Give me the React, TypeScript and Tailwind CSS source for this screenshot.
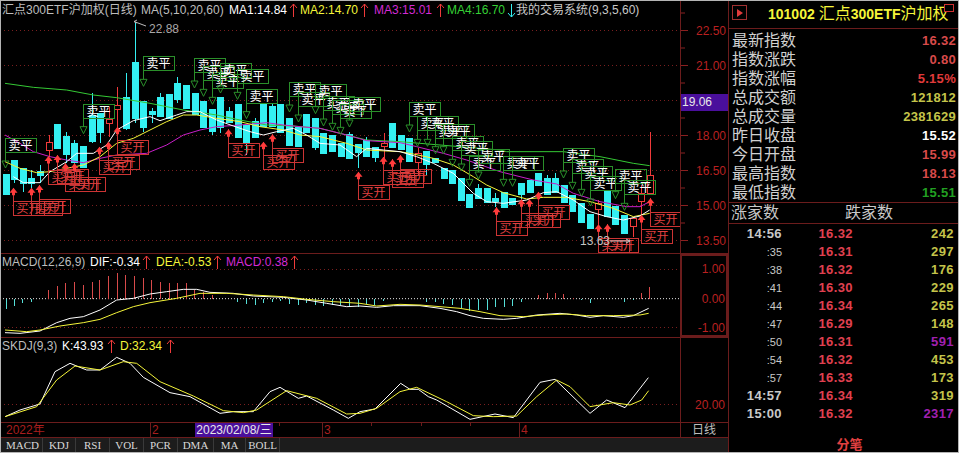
const font = "[font-family:'Liberation_Sans','Noto_Sans_CJK_SC',sans-serif]";

const RED = "#f03a3a";
const CYAN = "#34f0f2";

// 坐标都是放大 3 倍量出来的, 这里换回实际像素
const toPts = (arr: number[][]) => arr.map(([x, y]) => `${x / 3},${y / 3}`).join(" ");
const second = 1200;

// top, bottom, wickTop, wickBottom, hollow
const candles: number[][] = [
  [522, 585, 522, 585], [480, 540, 480, 550], [505, 553, 505, 575], [533, 553, 510, 565], [514, 527, 495, 550],
  [425, 450, 405, 470, 1], [372, 448, 372, 448], [408, 465, 395, 490], [430, 490, 420, 495], [438, 505, 438, 505],
  [345, 425, 280, 430], [340, 400, 340, 430], [358, 370, 320, 410, 1], [315, 327, 262, 380, 1], [292, 388, 220, 390],
  [186, 357, 65, 370], [303, 385, 303, 395], [333, 345, 325, 370], [292, 352, 280, 352], [282, 358, 282, 358],
  [250, 300, 232, 310], [255, 328, 255, 328], [280, 345, 280, 345], [303, 385, 303, 385], [327, 395, 327, 405],
  [292, 385, 292, 400], [333, 370, 320, 370], [312, 415, 312, 415], [375, 430, 375, 465], [362, 413, 355, 413],
  [312, 380, 312, 380], [318, 380, 310, 380], [312, 400, 312, 400], [353, 438, 353, 438], [380, 440, 380, 440],
  [342, 400, 342, 400], [355, 445, 355, 450], [400, 462, 400, 462], [405, 455, 405, 455], [428, 470, 428, 470],
  [403, 478, 395, 478], [432, 458, 432, 503], [420, 472, 410, 472], [440, 475, 440, 485], [428, 437, 400, 480, 1],
  [370, 443, 370, 443], [405, 450, 405, 450], [413, 485, 413, 485], [460, 485, 445, 525, 1], [452, 495, 452, 525],
  [475, 490, 475, 490], [505, 537, 505, 537], [510, 552, 510, 552], [535, 603, 535, 603], [582, 624, 582, 624],
  [565, 597, 552, 597], [565, 610, 565, 610], [595, 605, 580, 620], [575, 623, 575, 623], [595, 615, 595, 615],
  [550, 585, 550, 600], [540, 580, 540, 580], [520, 558, 520, 558], [535, 585, 525, 585], [533, 580, 520, 580],
  [555, 610, 555, 610], [585, 637, 585, 637], [610, 668, 610, 668], [643, 688, 643, 688], [610, 628, 600, 680, 1],
  [570, 650, 570, 650], [618, 675, 618, 675], [645, 703, 645, 703], [655, 678, 655, 710, 1], [580, 603, 555, 650, 1],
  [525, 580, 397, 580, 1],
];

const sells = [
  [15, 483], [248, 380], [428, 238], [583, 243], [608, 268], [635, 292], [661, 258], [712, 277], [737, 335],
  [866, 315], [893, 345], [944, 320], [970, 357], [995, 370], [1021, 382], [1048, 360],
  ...[
    [28, 375], [52, 418], [80, 418], [104, 440], [130, 440], [157, 478], [182, 492], [207, 538], [233, 516],
    [310, 538], [337, 538], [490, 513], [517, 547], [543, 568], [570, 597], [646, 575], [673, 610],
  ].map(([x, y]) => [x + second, y]),
];

const buys = [
  [40, 563], [94, 563], [118, 555], [145, 468], [170, 465], [196, 490], [221, 490], [298, 440], [325, 425],
  [350, 380], [685, 388], [790, 425], [815, 403], [1073, 515], [1150, 470], [1175, 478],
  ...[
    [0, 465], [287, 622], [362, 598], [388, 598], [415, 575], [595, 673], [620, 673], [724, 645], [749, 595],
  ].map(([x, y]) => [x + second, y]),
];

const ma60 = [[15, 250], [100, 262], [200, 270], [280, 285], [350, 293], [450, 310], [550, 330], [650, 345], [720, 360], [800, 375], [880, 378], [960, 385], [1040, 405], [1100, 420], [1200, 425], [1500, 450], [1520, 455], [1690, 455], [1800, 470], [1900, 490], [1949, 497]];
const ma20 = [[15, 405], [60, 430], [100, 455], [150, 470], [200, 480], [250, 488], [300, 475], [350, 465], [440, 460], [500, 435], [550, 405], [600, 390], [650, 380], [720, 375], [800, 368], [850, 375], [900, 380], [960, 385], [1040, 405], [1100, 422], [1200, 428], [1250, 440], [1330, 460], [1400, 480], [1500, 515], [1600, 540], [1670, 552], [1720, 580], [1800, 605], [1880, 620], [1920, 620], [1949, 605]];
const ma10 = [[15, 485], [60, 505], [110, 518], [150, 515], [200, 505], [250, 495], [300, 470], [350, 430], [400, 415], [450, 390], [500, 365], [550, 345], [590, 345], [650, 355], [720, 365], [780, 380], [850, 390], [900, 405], [960, 410], [1040, 430], [1100, 450], [1200, 455], [1240, 462], [1300, 475], [1360, 495], [1420, 530], [1460, 555], [1510, 578], [1580, 597], [1630, 592], [1700, 592], [1770, 605], [1840, 625], [1900, 650], [1949, 640]];
const ma5 = [[40, 530], [70, 548], [120, 548], [150, 515], [200, 485], [230, 460], [280, 460], [320, 435], [350, 390], [400, 362], [450, 350], [480, 362], [530, 345], [560, 335], [600, 335], [650, 360], [700, 378], [750, 395], [790, 405], [830, 395], [880, 385], [920, 405], [960, 430], [1020, 435], [1070, 470], [1100, 445], [1150, 450], [1200, 455], [1250, 470], [1300, 490], [1360, 520], [1420, 580], [1460, 605], [1510, 610], [1580, 600], [1630, 578], [1670, 575], [1720, 600], [1770, 635], [1820, 650], [1870, 660], [1920, 648], [1949, 630]];

const macdBars = [
  [17, 177], [41, 168], [67, 160], [93, 155], [145, 120], [170, 108], [196, 100], [221, 97], [248, 105], [275, 97],
  [298, 90], [325, 78], [350, 68], [376, 75], [403, 78], [428, 85], [454, 90], [479, 95], [506, 100], [532, 98],
  [557, 100], [583, 120], [608, 125], [635, 135], [712, 155], [737, 162], [764, 165], [790, 158], [815, 155],
  [841, 152], [866, 162], [893, 165], [919, 158], [944, 165], [970, 168], [995, 165], [1021, 165], [1048, 168],
  [1073, 170], [1098, 162], [1123, 165], [1150, 152], [1228, 148], [1278, 155], [1305, 155], [1330, 162],
  [1357, 165], [1382, 175], [1408, 182], [1433, 180], [1460, 180], [1486, 172], [1511, 170], [1537, 168],
  [1563, 155], [1615, 135], [1640, 130], [1665, 130], [1690, 133], [1718, 143], [1743, 150], [1769, 160],
  [1845, 148], [1873, 155], [1898, 150], [1923, 128], [1948, 110],
];
const dif = [[15, 248], [60, 250], [120, 243], [170, 218], [210, 205], [250, 200], [300, 180], [350, 150], [400, 145], [450, 132], [500, 125], [550, 118], [590, 118], [630, 127], [700, 130], [760, 138], [850, 142], [920, 150], [980, 160], [1040, 170], [1080, 168], [1130, 172], [1180, 167], [1260, 167], [1320, 175], [1370, 185], [1410, 197], [1450, 205], [1510, 208], [1550, 205], [1610, 195], [1680, 190], [1730, 195], [1770, 202], [1810, 197], [1870, 202], [1900, 197], [1946, 175]];
const dea = [[15, 240], [80, 245], [120, 240], [180, 228], [250, 218], [300, 208], [350, 188], [400, 170], [450, 158], [530, 145], [600, 130], [680, 130], [760, 135], [850, 140], [920, 148], [1000, 155], [1080, 160], [1130, 168], [1200, 163], [1260, 165], [1320, 170], [1380, 175], [1440, 185], [1500, 197], [1570, 200], [1630, 195], [1700, 192], [1760, 197], [1840, 197], [1920, 195], [1946, 190]];
const kLine = [[15, 500], [60, 480], [120, 462], [165, 365], [210, 340], [260, 360], [300, 360], [350, 322], [390, 340], [430, 382], [510, 428], [570, 440], [660, 490], [700, 485], [760, 485], [810, 425], [840, 412], [895, 445], [920, 438], [1000, 480], [1045, 505], [1080, 485], [1125, 477], [1202, 400], [1230, 418], [1255, 418], [1285, 440], [1310, 450], [1410, 508], [1485, 492], [1540, 503], [1620, 397], [1665, 388], [1770, 490], [1820, 450], [1875, 473], [1945, 383]];
const dLine = [[15, 500], [110, 470], [170, 390], [225, 348], [300, 360], [370, 335], [410, 340], [480, 395], [580, 438], [670, 482], [730, 488], [770, 480], [860, 422], [950, 445], [1040, 492], [1080, 490], [1130, 475], [1200, 425], [1250, 412], [1340, 455], [1420, 497], [1480, 500], [1550, 498], [1610, 440], [1670, 390], [1710, 410], [1770, 470], [1840, 458], [1890, 465], [1925, 450], [1946, 422]];

function UpArrow({ color = RED }: { color?: string }) {
  return (
    <svg width="9" height="15" viewBox="0 0 9 15" className="shrink-0">
      <path d="M4.5 14V1M1 5L4.5 1L8 5" fill="none" stroke={color} strokeWidth="1" />
    </svg>
  );
}

function DownArrow({ color = CYAN }: { color?: string }) {
  return (
    <svg width="9" height="15" viewBox="0 0 9 15" className="shrink-0">
      <path d="M4.5 1V14M1 10L4.5 14L8 10" fill="none" stroke={color} strokeWidth="1" />
    </svg>
  );
}

function Dotted({ y, color = "#7a1f1f" }: { y: number; color?: string }) {
  return <line x1="0" x2="680" y1={y} y2={y} stroke={color} strokeDasharray="1 3" />;
}

function MainPlot() {
  return (
    <svg width="680" height="253" viewBox="0 0 680 253" className="block">
      {[30, 65, 100, 135, 170, 205, 240].map((y) => (
        <Dotted key={y} y={y + 0.5} />
      ))}
      {candles.map(([t, b, wt, wb, hollow], i) => {
        const x = Math.round(5.7 + 8.587 * i);
        const color = hollow ? RED : CYAN;
        return (
          <g key={i} shapeRendering="crispEdges">
            <line x1={x + 0.5} x2={x + 0.5} y1={wt / 3} y2={wb / 3} stroke={color} />
            {hollow ? (
              <rect x={x - 2.5} y={t / 3 + 0.5} width="6" height={Math.max((b - t) / 3, 3)} fill="#000" stroke={color} />
            ) : (
              <rect x={x - 3} y={t / 3} width="7" height={(b - t) / 3} fill={color} />
            )}
          </g>
        );
      })}
      <polyline points={toPts(ma60)} fill="none" stroke="#35c935" />
      <polyline points={toPts(ma20)} fill="none" stroke="#c81fc8" />
      <polyline points={toPts(ma10)} fill="none" stroke="#f5f53a" />
      <polyline points={toPts(ma5)} fill="none" stroke="#ffffff" />
      {sells.map(([x3, y3], i) => {
        const x = Math.round(x3 / 3) + 0.5;
        const y = y3 / 3;
        return (
          <g key={i}>
            <rect x={x} y={y - 22.5} width="31" height="14" fill="none" stroke="#2a8f2a" shapeRendering="crispEdges" />
            <line x1={x} x2={x} y1={y - 22} y2={y} stroke="#2a8f2a" shapeRendering="crispEdges" />
            <path d={`M${x - 3.5} ${y}H${x + 3.5}L${x} ${y + 7}Z`} fill="none" stroke="#2a8f2a" />
            <text x={x + 15} y={y - 11} fontSize="12" fill="#fff" textAnchor="middle" fontFamily="'Noto Sans CJK SC', sans-serif">
              卖平
            </text>
          </g>
        );
      })}
      {buys.map(([x3, y3], i) => {
        const x = Math.round(x3 / 3) + 0.5;
        const y = y3 / 3;
        return (
          <g key={i}>
            <rect x={x} y={y + 14} width="31" height="14" fill="none" stroke="#cc3434" shapeRendering="crispEdges" />
            <line x1={x} x2={x} y1={y} y2={y + 28} stroke="#cc3434" shapeRendering="crispEdges" />
            <path d={`M${x} ${y}L${x + 4} ${y + 5}H${x + 1.5}V${y + 7.5}H${x - 1.5}V${y + 5}H${x - 4}Z`} fill="#ff3c3c" />
            <text x={x + 15} y={y + 25.5} fontSize="12" fill="#e04040" textAnchor="middle" fontFamily="'Noto Sans CJK SC', sans-serif">
              买开
            </text>
          </g>
        );
      })}
      <path d="M134 21.5L137 20M134 21.5L137 23M134 21.5L146 26" fill="none" stroke="#bbb" />
      <text x="149" y="33" fontSize="12" fill="#a8a8a8" fontFamily="'Liberation Sans', sans-serif">22.88</text>
      <text x="580" y="245" fontSize="12" fill="#c4c4c4" fontFamily="'Liberation Sans', sans-serif">13.63</text>
      <path d="M610 241H630M626 239L630 241L626 243" fill="none" stroke="#c4c4c4" />
    </svg>
  );
}

function MacdPlot() {
  return (
    <svg width="680" height="83" viewBox="0 0 680 83" className="block">
      <g transform="translate(0 -4)">
        <Dotted y={19.5} />
        <Dotted y={77.5} />
        <line x1="0" x2="680" y1="48.67" y2="48.67" stroke="#e8e8e8" strokeDasharray="1 2" />
        {macdBars.map(([x3, y3], i) => {
          const x = Math.round(x3 / 3) + 0.5;
          return (
            <line key={i} x1={x} x2={x} y1="48.67" y2={y3 / 3} stroke={y3 < 146 ? "#d84a4a" : "#55e0d8"} shapeRendering="crispEdges" />
          );
        })}
        <polyline points={toPts(dif)} fill="none" stroke="#fff" />
        <polyline points={toPts(dea)} fill="none" stroke="#f5f53a" />
      </g>
    </svg>
  );
}

function KdjPlot() {
  return (
    <svg width="680" height="84" viewBox="0 0 680 84" className="block">
      <g transform="translate(0 -88)">
        <Dotted y={154.5} />
        <polyline points={toPts(kLine)} fill="none" stroke="#fff" />
        <polyline points={toPts(dLine)} fill="none" stroke="#f5f53a" />
      </g>
    </svg>
  );
}

function MainAxis() {
  const labels = [
    { y: 30, t: "22.50" }, { y: 65, t: "21.00" }, { y: 135, t: "18.00" },
    { y: 170, t: "16.50" }, { y: 205, t: "15.00" }, { y: 240, t: "13.50" },
  ];
  return (
    <svg width="47" height="253" viewBox="0 0 47 253" className="block">
      {[30, 65, 100, 135, 170, 205, 240].map((y) => (
        <line key={y} x1="0" x2="7" y1={y + 0.5} y2={y + 0.5} stroke="#8a2020" />
      ))}
      {[12.5, 47.5, 82.5, 117.5, 152.5, 187.5, 222.5].map((y) => (
        <line key={y} x1="0" x2="4" y1={y + 0.5} y2={y + 0.5} stroke="#8a2020" />
      ))}
      {labels.map((l) => (
        <text key={l.t} x="45" y={l.y + 5} fontSize="12" fill="#b92020" textAnchor="end" fontFamily="'Liberation Sans', sans-serif">
          {l.t}
        </text>
      ))}
    </svg>
  );
}

const panelRows = [
  { label: "最新指数", value: "16.32", color: "text-[#d84a4a]" },
  { label: "指数涨跌", value: "0.80", color: "text-[#d84a4a]" },
  { label: "指数涨幅", value: "5.15%", color: "text-[#e03a3a]" },
  { label: "总成交额", value: "121812", color: "text-[#c4c44a]" },
  { label: "总成交量", value: "2381629", color: "text-[#c4c44a]" },
  { label: "昨日收盘", value: "15.52", color: "text-white" },
  { label: "今日开盘", value: "15.99", color: "text-[#d84a4a]" },
  { label: "最高指数", value: "18.13", color: "text-[#d84a4a]" },
  { label: "最低指数", value: "15.51", color: "text-[#22a022]" },
];

const ticks = [
  { time: "14:56", price: "16.32", vol: "242" },
  { time: ":35", price: "16.31", vol: "297" },
  { time: ":38", price: "16.32", vol: "176" },
  { time: ":41", price: "16.30", vol: "229" },
  { time: ":44", price: "16.34", vol: "265" },
  { time: ":47", price: "16.29", vol: "148" },
  { time: ":50", price: "16.31", vol: "591", purple: true },
  { time: ":54", price: "16.32", vol: "453" },
  { time: ":57", price: "16.33", vol: "173" },
  { time: "14:57", price: "16.34", vol: "319" },
  { time: "15:00", price: "16.32", vol: "2317", purple: true },
];

const tabs = [
  { name: "MACD", w: "w-[40px]" },
  { name: "KDJ", w: "w-[33px]" },
  { name: "RSI", w: "w-[34px]" },
  { name: "VOL", w: "w-[34px]" },
  { name: "PCR", w: "w-[34px]" },
  { name: "DMA", w: "w-[36px]" },
  { name: "MA", w: "w-[32px]" },
  { name: "BOLL", w: "w-[34px]" },
];

export default function App() {
  return (
    <div className={`relative flex w-[959px] h-[453px] bg-black overflow-hidden ${font}`}>
      <div className="flex flex-col w-[728px] shrink-0">
        {/* 主图 */}
        <div className="flex h-[253px]">
          <div className="relative w-[680px] shrink-0">
            <MainPlot />
            <div className="absolute left-[2px] top-[3px] flex items-center text-[12px] leading-[15px] whitespace-nowrap">
              <span className="text-[#bdbdbd] w-[139px]">汇点300ETF沪加权(日线)</span>
              <span className="text-[#bdbdbd] w-[88px]">MA(5,10,20,60)</span>
              <span className="text-white w-[60px]">MA1:14.84</span>
              <UpArrow />
              <span className="text-[#f5f53a] w-[60px] ml-[2px]">MA2:14.70</span>
              <UpArrow />
              <span className="text-[#d42ad4] w-[62px] ml-[5px]">MA3:15.01</span>
              <UpArrow />
              <span className="text-[#35d035] w-[60px] ml-[2px]">MA4:16.70</span>
              <DownArrow />
              <span className="text-[#c8c8c8]">我的交易系统(9,3,5,60)</span>
            </div>
          </div>
          <div className="relative flex-1 border-l border-[#6b1c1c]">
            <MainAxis />
            <div className="absolute left-0 top-[94px] w-[47px] h-[17px] bg-[#4a0f9c] text-[#e8e8e8] text-[12px] leading-[17px] pl-[1px]">
              19.06
            </div>
          </div>
        </div>

        {/* MACD */}
        <div className="flex h-[84px] border-t border-[#6b1c1c]">
          <div className="relative w-[680px] shrink-0">
            <MacdPlot />
            <div className="absolute left-[2px] top-[1px] flex items-center text-[12px] leading-[15px] whitespace-nowrap">
              <span className="text-[#bdbdbd] w-[88px]">MACD(12,26,9)</span>
              <span className="text-white w-[52px]">DIF:-0.34</span>
              <UpArrow />
              <span className="text-[#f5f53a] w-[57px] ml-[5px]">DEA:-0.53</span>
              <UpArrow />
              <span className="text-[#d42ad4] w-[64px] ml-[4px]">MACD:0.38</span>
              <UpArrow />
            </div>
          </div>
          <div className="flex-1 border-2 border-[#6b1c1c] flex flex-col items-end pr-[1px] text-[12px] leading-[14px] text-[#b92020]">
            <span className="mt-[6px]">1.00</span>
            <span className="mt-[16px]">0.00</span>
            <span className="mt-[15px]">-1.00</span>
          </div>
        </div>

        {/* SKDJ */}
        <div className="flex h-[85px] border-t border-[#6b1c1c]">
          <div className="relative w-[680px] shrink-0">
            <KdjPlot />
            <div className="absolute left-[2px] top-[1px] flex items-center text-[12px] leading-[15px] whitespace-nowrap">
              <span className="text-[#bdbdbd] w-[60px]">SKDJ(9,3)</span>
              <span className="text-white w-[45px]">K:43.93</span>
              <UpArrow />
              <span className="text-[#f5f53a] w-[46px] ml-[4px]">D:32.34</span>
              <UpArrow />
            </div>
          </div>
          <div className="flex-1 border-l border-[#6b1c1c] flex justify-end pr-[3px] pt-[60px] text-[12px] leading-[14px] text-[#b92020]">
            20.00
          </div>
        </div>

        {/* 日期轴 */}
        <div className="flex h-[15px] border-t border-[#6b1c1c] text-[12px] leading-[14px]">
          <div className="relative w-[680px] shrink-0 text-[#a81e1e]">
            <span className="absolute left-[6px] top-0">2022年</span>
            <span className="absolute left-[150px] top-0 h-full border-l border-[#6b1c1c] pl-[1px]">2</span>
            <span className="absolute left-[195px] top-0 w-[78px] h-[14px] bg-[#4a0f9c] text-[#e8e8e8] text-center">2023/02/08/三</span>
            <span className="absolute left-[279px] top-0 h-[3px] border-l border-[#6b1c1c]" />
            <span className="absolute left-[322px] top-0 h-full border-l border-[#6b1c1c] pl-[1px]">3</span>
            <span className="absolute left-[371px] top-0 h-[3px] border-l border-[#6b1c1c]" />
            <span className="absolute left-[421px] top-0 h-[3px] border-l border-[#6b1c1c]" />
            <span className="absolute left-[470px] top-0 h-[3px] border-l border-[#6b1c1c]" />
            <span className="absolute left-[519px] top-0 h-full border-l border-[#6b1c1c] pl-[1px]">4</span>
          </div>
          <div className="flex-1 border-l border-[#6b1c1c] pl-[11px] text-[#bdbdbd]">日线</div>
        </div>

        {/* 指标切换 */}
        <div className="flex flex-1 border-t border-[#6b1c1c] bg-[#1c1c1c] pl-[3px] font-['Liberation_Serif','Noto_Sans_CJK_SC',serif] text-[11px] leading-[14px] text-[#d8d8d8]">
          {tabs.map((t) => (
            <div key={t.name} className={`${t.w} text-center border-r border-[#3a3a3a]`}>
              {t.name}
            </div>
          ))}
        </div>
      </div>

      {/* 右侧报价 */}
      <div className="flex flex-col flex-1 border-l border-[#6b1c1c]">
        <div className="flex items-start h-[29px] shrink-0 border-b border-[#6b1c1c] relative overflow-hidden">
          <div className="mt-[5px] ml-[3px] w-[15px] h-[15px] border border-[#a03030] flex items-center justify-center shrink-0">
            <span className="w-0 h-0 border-y-[4px] border-y-transparent border-l-[6px] border-l-[#e03a3a]" />
          </div>
          <div className="ml-[21px] mt-[5px] whitespace-nowrap text-[14px] leading-[18px] text-[#f5f53a]">
            <span className="font-bold">101002</span>
            <span className="ml-[4px] text-[16px]">汇点</span>
            <span className="font-bold">300ETF</span>
            <span className="text-[16px]">沪加权</span>
          </div>
          <div className="absolute right-[5px] top-[4px] w-[10px] h-[8px] border border-[#d03030] bg-black" />
        </div>

        <div className="flex flex-col pt-[2px] h-[173px] shrink-0">
          {panelRows.map((r) => (
            <div key={r.label} className="flex justify-between items-center h-[19px] pl-[3px] pr-[3px]">
              <span className="text-[16px] leading-[19px] text-[#d0d0d0]">{r.label}</span>
              <span className={`font-bold text-[13px] tracking-[0.3px] ${r.color}`}>{r.value}</span>
            </div>
          ))}
        </div>

        <div className="flex items-center h-[22px] shrink-0 border-y border-[#6b1c1c] pl-[2px] text-[16px] text-[#c8c8c8]">
          <span className="w-[114px]">涨家数</span>
          <span>跌家数</span>
        </div>

        <div className="flex flex-col pt-[1px]">
          {ticks.map((t, i) => (
            <div key={i} className="flex items-center h-[18px]">
              <span className={`w-[53px] text-right text-[#c8c8c8] ${t.time.length > 3 ? "font-bold text-[13px] tracking-[0.4px]" : "text-[11px]"}`}>
                {t.time}
              </span>
              <span className="w-[71px] text-right font-bold text-[13px] tracking-[0.4px] text-[#e04050]">{t.price}</span>
              <span className={`flex-1 text-right pr-[5px] font-bold text-[13px] tracking-[0.4px] ${t.purple ? "text-[#a020b0]" : "text-[#c4c44a]"}`}>
                {t.vol}
              </span>
            </div>
          ))}
        </div>

        <div className="text-center mt-[12px] pl-[11px] text-[13px] font-bold text-[#e04040]">分笔</div>
      </div>

      {/* 窗口外框 */}
      <div className="absolute inset-0 border border-[#b4b4b4] pointer-events-none" />
    </div>
  );
}
